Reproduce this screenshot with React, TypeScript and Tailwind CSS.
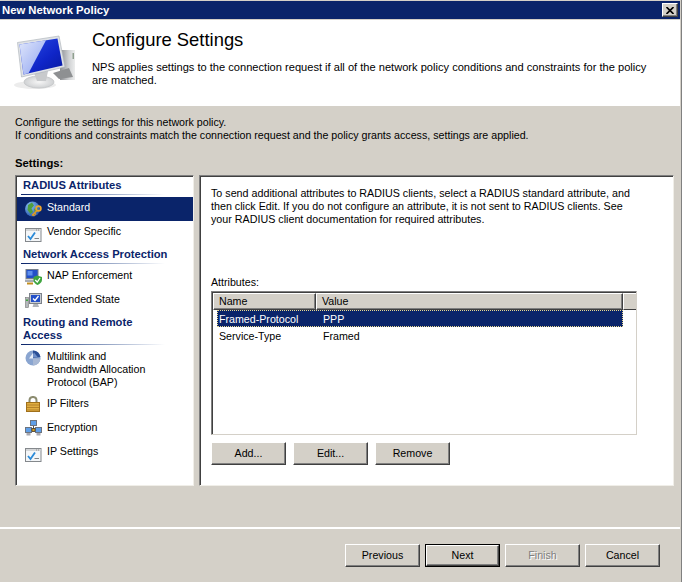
const font = "font-['Liberation_Sans',Arial,sans-serif]";

const raised = "border border-t-white border-l-white border-r-[#404040] border-b-[#404040] shadow-[inset_-1px_-1px_0_#808080]";
const sunken = "border border-t-[#808080] border-l-[#808080] shadow-[inset_1px_1px_0_#404040]";

function CheckWindow() {
  return (
    <svg width="17" height="18" viewBox="0 0 17 18" className="block">
      <rect x="0.5" y="3.5" width="15.5" height="13" fill="#f4f6f8" stroke="#84888c" />
      <rect x="1" y="4" width="14.5" height="2" fill="#d4d6d8" />
      <path d="M11 5 H15" stroke="#8c8c8c" strokeDasharray="1 1" />
      <path d="M3 11 L5.5 14 L10 7.5" fill="none" stroke="#2a8ad8" strokeWidth="1.8" />
      <path d="M9.5 13.5 H14" stroke="#808488" />
    </svg>
  );
}

function GlobeKey() {
  return (
    <svg width="17" height="18" viewBox="0 0 17 18" className="block">
      <defs>
        <radialGradient id="globe" cx="0.35" cy="0.3" r="0.8">
          <stop offset="0" stopColor="#8fc4f5" />
          <stop offset="1" stopColor="#1d4fa8" />
        </radialGradient>
      </defs>
      <circle cx="7.5" cy="8" r="7.5" fill="url(#globe)" />
      <path d="M3 4 L7 1.5 L9 4.5 L6.5 7.5 L8 11 L5.5 13 L2.5 9 Z" fill="#4f9e3f" />
      <path d="M9 8 L12 6 L13 10 L10 12 Z" fill="#4f9e3f" />
      <circle cx="13.5" cy="7.5" r="2.4" fill="none" stroke="#eda52c" strokeWidth="1.7" />
      <path d="M12 9.5 L7 14.5 M8 13.5 L9.5 15 M9.5 12 L11 13.5" stroke="#e09a20" strokeWidth="1.5" />
    </svg>
  );
}

function NapIcon() {
  return (
    <svg width="17" height="16" viewBox="0 0 17 16" className="block">
      <rect x="1" y="0.5" width="12" height="9" fill="#2350c8" stroke="#77808c" />
      <rect x="2.5" y="2" width="5" height="4.5" fill="#5f8fec" />
      <path d="M0 10.5 H11 V13 H0 Z" fill="#a8adb4" />
      <path d="M2 14.5 H8" stroke="#c28f20" strokeWidth="2" />
      <path d="M12 6.5 L17 8 V11 C17 13.5 14.5 15 12.5 16 C10.5 15 8.5 13.5 8.5 11 V8 Z" fill="#3fa53f" />
      <path d="M10.2 11 L12.3 13 L15 9" fill="none" stroke="#fff" strokeWidth="1.3" />
    </svg>
  );
}

function StateIcon() {
  return (
    <svg width="17" height="15" viewBox="0 0 17 15" className="block">
      <rect x="4.5" y="0.5" width="12" height="10" fill="#c8ccd2" stroke="#7c828a" />
      <rect x="6" y="2" width="9" height="7" fill="#2350c8" />
      <path d="M8 5.5 L10 7.5 L13.5 3" fill="none" stroke="#fff" strokeWidth="1.3" />
      <path d="M8.5 11 H13 L14 14 H7.5 Z" fill="#b0b4ba" />
      <rect x="0.5" y="4.5" width="3" height="10" fill="#b4b8bc" stroke="#777" strokeWidth="0.6" />
      <rect x="1" y="6.5" width="2" height="1.5" fill="#3fa53f" />
    </svg>
  );
}

function PieIcon() {
  return (
    <svg width="16" height="16" viewBox="0 0 16 16" className="block">
      <circle cx="8" cy="8" r="7.5" fill="#8aa5d0" />
      <path d="M8 8 L8 0.5 A7.5 7.5 0 0 1 15.5 7 Z" fill="#2a4f96" />
      <path d="M6 7.5 L9 2.5 L13 7.5 Z" fill="#6f8fc8" />
      <path d="M8 8.5 L15.5 8.5 A7.5 7.5 0 0 1 8 15.5 Z" fill="#a8b8d4" />
      <path d="M4 8.5 L8 3 V8.5 Z" fill="#e8eef8" />
    </svg>
  );
}

function LockIcon() {
  return (
    <svg width="14" height="16" viewBox="0 0 14 16" className="block">
      <path d="M3.5 7 V4.5 C3.5 -0.2 10.5 -0.2 10.5 4.5 V7" fill="none" stroke="#8c8c70" strokeWidth="2" />
      <rect x="0.5" y="6.5" width="13" height="9" fill="#e0ae40" stroke="#a0701a" />
      <path d="M1 9 H13 M1 11.5 H13 M1 14 H13" stroke="#b5822a" />
    </svg>
  );
}

function NetworkIcon() {
  return (
    <svg width="17" height="16" viewBox="0 0 17 16" className="block">
      <path d="M8.5 5 V10 M3.5 11 H13.5" stroke="#555" />
      <rect x="5.5" y="0.5" width="6" height="5" fill="#5f9fe8" stroke="#6c7480" />
      <rect x="0.5" y="7.5" width="6" height="5" fill="#5f9fe8" stroke="#6c7480" />
      <rect x="10.5" y="7.5" width="6" height="5" fill="#5f9fe8" stroke="#6c7480" />
      <rect x="1.5" y="13" width="4" height="2.5" fill="#a8a8b0" />
      <rect x="11.5" y="13" width="4" height="2.5" fill="#a8a8b0" />
      <rect x="7" y="8.5" width="3" height="3" fill="#d8a020" stroke="#222" strokeWidth="0.6" />
    </svg>
  );
}

function ComputerIcon() {
  return (
    <svg width="64" height="56" viewBox="0 0 64 56" className="block">
      <defs>
        <linearGradient id="screen" x1="0" y1="0" x2="1" y2="1">
          <stop offset="0" stopColor="#2c50e8" />
          <stop offset="0.6" stopColor="#0f25c8" />
          <stop offset="1" stopColor="#081a9c" />
        </linearGradient>
        <linearGradient id="glare" x1="0" y1="0" x2="1" y2="1">
          <stop offset="0" stopColor="#dfe6fb" />
          <stop offset="1" stopColor="#8da2f0" />
        </linearGradient>
        <linearGradient id="tower" x1="0" y1="0" x2="1" y2="0">
          <stop offset="0" stopColor="#8d8f92" />
          <stop offset="0.6" stopColor="#d0d2d4" />
          <stop offset="1" stopColor="#eceded" />
        </linearGradient>
        <radialGradient id="base">
          <stop offset="0" stopColor="#f6f6f6" />
          <stop offset="1" stopColor="#cfd1d3" />
        </radialGradient>
      </defs>
      <path d="M47 15 L62 15 V45 L47 45 Z" fill="url(#tower)" />
      <rect x="59.5" y="18" width="1.5" height="6" fill="#8fa08f" />
      <ellipse cx="22" cy="50" rx="21" ry="4" fill="#ececec" />
      <ellipse cx="26" cy="47" rx="15" ry="6" fill="url(#base)" stroke="#c8cacc" />
      <path d="M21 38 L35 36 L33 46 L24 46 Z" fill="#c8cacc" />
      <path d="M40 38 L56 33 L60 42 L46 44 Z" fill="#8e9092" />
      <path d="M4.5 7.5 L46 1 L52 32 L8.5 42 Z" fill="#dfe2e6" stroke="#a8aeb6" strokeWidth="0.6" />
      <path d="M6.5 9.5 L44.5 3.5 L49.5 30.5 L10.5 39.5 Z" fill="url(#screen)" />
      <path d="M6.5 9.5 L33 5.3 L15.5 38.3 L10.5 39.5 Z" fill="url(#glare)" />
    </svg>
  );
}

function Heading({ children }: { children: React.ReactNode }) {
  return (
    <div className="pl-1">
      <div className="pl-0.5 font-bold text-[11.2px] text-[#0a246a] leading-[13px] w-[150px]">{children}</div>
      <div className="mt-[2px] h-px w-[144px] bg-gradient-to-r from-[#0a246a] to-white" />
    </div>
  );
}

function NavItem({ icon, label, selected, className = "h-6" }: { icon: React.ReactNode; label: React.ReactNode; selected?: boolean; className?: string }) {
  return (
    <div className={`flex pl-2 ${selected ? "bg-[#0a246a] text-white" : "text-black"} ${className}`}>
      <div className="w-[22px] shrink-0 pt-[4px]">{icon}</div>
      <div className="pt-[4px] leading-[13px]">{label}</div>
    </div>
  );
}

function Button({ label, size = "w-[75px] h-[23px]", disabled }: { label: string; size?: string; disabled?: boolean }) {
  return (
    <div className={`${size} flex items-center justify-center pb-[2px] bg-[#d4d0c8] ${raised} ${disabled ? "text-[#808080] [text-shadow:1px_1px_0_#fff]" : "text-black"}`}>
      {label}
    </div>
  );
}

export default function App() {
  return (
    <div className={`${font} w-[682px] h-[582px] overflow-hidden bg-[#d4d0c8] text-[10.67px] text-black border-r border-r-[#808080] pr-px pt-px`}>
      <div className="h-[18px] bg-[#0a246a] flex items-center justify-between pl-0.5 pr-0.5 text-white text-[11.3px] font-bold">
        <span>New Network Policy</span>
        <div className={`w-4 h-[14px] bg-[#d4d0c8] ${raised} flex items-center justify-center`}>
          <svg width="8" height="7" viewBox="0 0 8 7">
            <path d="M0.5 0 L7.5 7 M7.5 0 L0.5 7" stroke="#000" strokeWidth="1.6" />
          </svg>
        </div>
      </div>

      <div className="mt-px h-[86px] bg-white flex">
        <div className="w-[92px] shrink-0 pl-[13px] pt-[15px]">
          <ComputerIcon />
        </div>
        <div>
          <div className="mt-[10px] text-[18.4px] leading-[20px]">Configure Settings</div>
          <div className="mt-[11px] text-[11.1px] leading-[13px]">
            NPS applies settings to the connection request if all of the network policy conditions and constraints for the policy<br />are matched.
          </div>
        </div>
      </div>

      <div className="px-[15px] pt-[10px]">
        <div className="leading-[13px]">Configure the settings for this network policy.</div>
        <div className="leading-[13px]">If conditions and constraints match the connection request and the policy grants access, settings are applied.</div>
        <div className="mt-[15px] font-bold text-[11.3px] leading-[13px]">Settings:</div>

        <div className="mt-[5px] flex gap-[5px]">
          <div className={`w-[179px] h-[311px] shrink-0 bg-white ${sunken} border-r-[#f0eee8] border-b-[#f0eee8] pl-px pt-[3px]`}>
            <Heading>RADIUS Attributes</Heading>
            <div className="h-[2px]" />
            <NavItem selected icon={<GlobeKey />} label="Standard" />
            <NavItem icon={<CheckWindow />} label="Vendor Specific" />
            <div className="h-[3px]" />
            <Heading>Network Access Protection</Heading>
            <div className="h-[1px]" />
            <NavItem icon={<NapIcon />} label="NAP Enforcement" />
            <NavItem icon={<StateIcon />} label="Extended State" />
            <div className="h-[3px]" />
            <Heading>Routing and Remote Access</Heading>
            <div className="h-[1px]" />
            <NavItem className="h-[47px]" icon={<PieIcon />} label={<>Multilink and<br />Bandwidth Allocation<br />Protocol (BAP)</>} />
            <NavItem icon={<div className="-mt-px ml-px"><LockIcon /></div>} label="IP Filters" />
            <NavItem icon={<div className="-mt-px"><NetworkIcon /></div>} label="Encryption" />
            <NavItem icon={<CheckWindow />} label="IP Settings" />
          </div>

          <div className={`w-[475px] h-[311px] shrink-0 bg-white ${sunken} border-r-[#f0eee8] border-b-[#f0eee8] pl-[11px] pt-[11px]`}>
            <div className="w-[425px] text-[10.72px] leading-[13px]">
              To send additional attributes to RADIUS clients, select a RADIUS standard attribute, and then click Edit. If you do not configure an attribute, it is not sent to RADIUS clients. See your RADIUS client documentation for required attributes.
            </div>
            <div className="mt-[50px] leading-[13px]">Attributes:</div>
            <div className={`mt-[2px] w-[426px] h-[144px] bg-white ${sunken} border-r-[#d4d0c8] border-b-[#d4d0c8] pl-px pt-px`}>
              <div className="flex h-[17px]">
                <div className={`w-[103px] bg-[#d4d0c8] ${raised} pl-[5px] leading-[15px]`}>Name</div>
                <div className={`w-[307px] bg-[#d4d0c8] ${raised} pl-[5px] leading-[15px]`}>Value</div>
                <div className="flex-1 bg-[#d4d0c8] border-t border-t-white border-l border-l-white border-b border-b-[#404040]" />
              </div>
              <div className="ml-[4px] w-[406px] h-[17px] flex items-center bg-[#0a246a] text-white border border-dotted border-[#e8d890] pl-px">
                <span className="w-[104px]">Framed-Protocol</span>
                <span>PPP</span>
              </div>
              <div className="ml-[4px] w-[406px] h-[17px] flex items-center pl-[2px]">
                <span className="w-[104px]">Service-Type</span>
                <span>Framed</span>
              </div>
            </div>
            <div className="mt-[7px] flex gap-[7px]">
              <Button label="Add..." />
              <Button label="Edit..." />
              <Button label="Remove" />
            </div>
          </div>
        </div>

        <div className="-mx-[15px] mt-[41px] h-[2px] bg-white" />
        <div className="mt-[15px] flex justify-end gap-[5px] pr-[5px]">
          <Button label="Previous" />
          <div className="border border-black">
            <Button label="Next" size="w-[73px] h-[21px]" />
          </div>
          <Button label="Finish" disabled />
          <Button label="Cancel" />
        </div>
      </div>
    </div>
  );
}
